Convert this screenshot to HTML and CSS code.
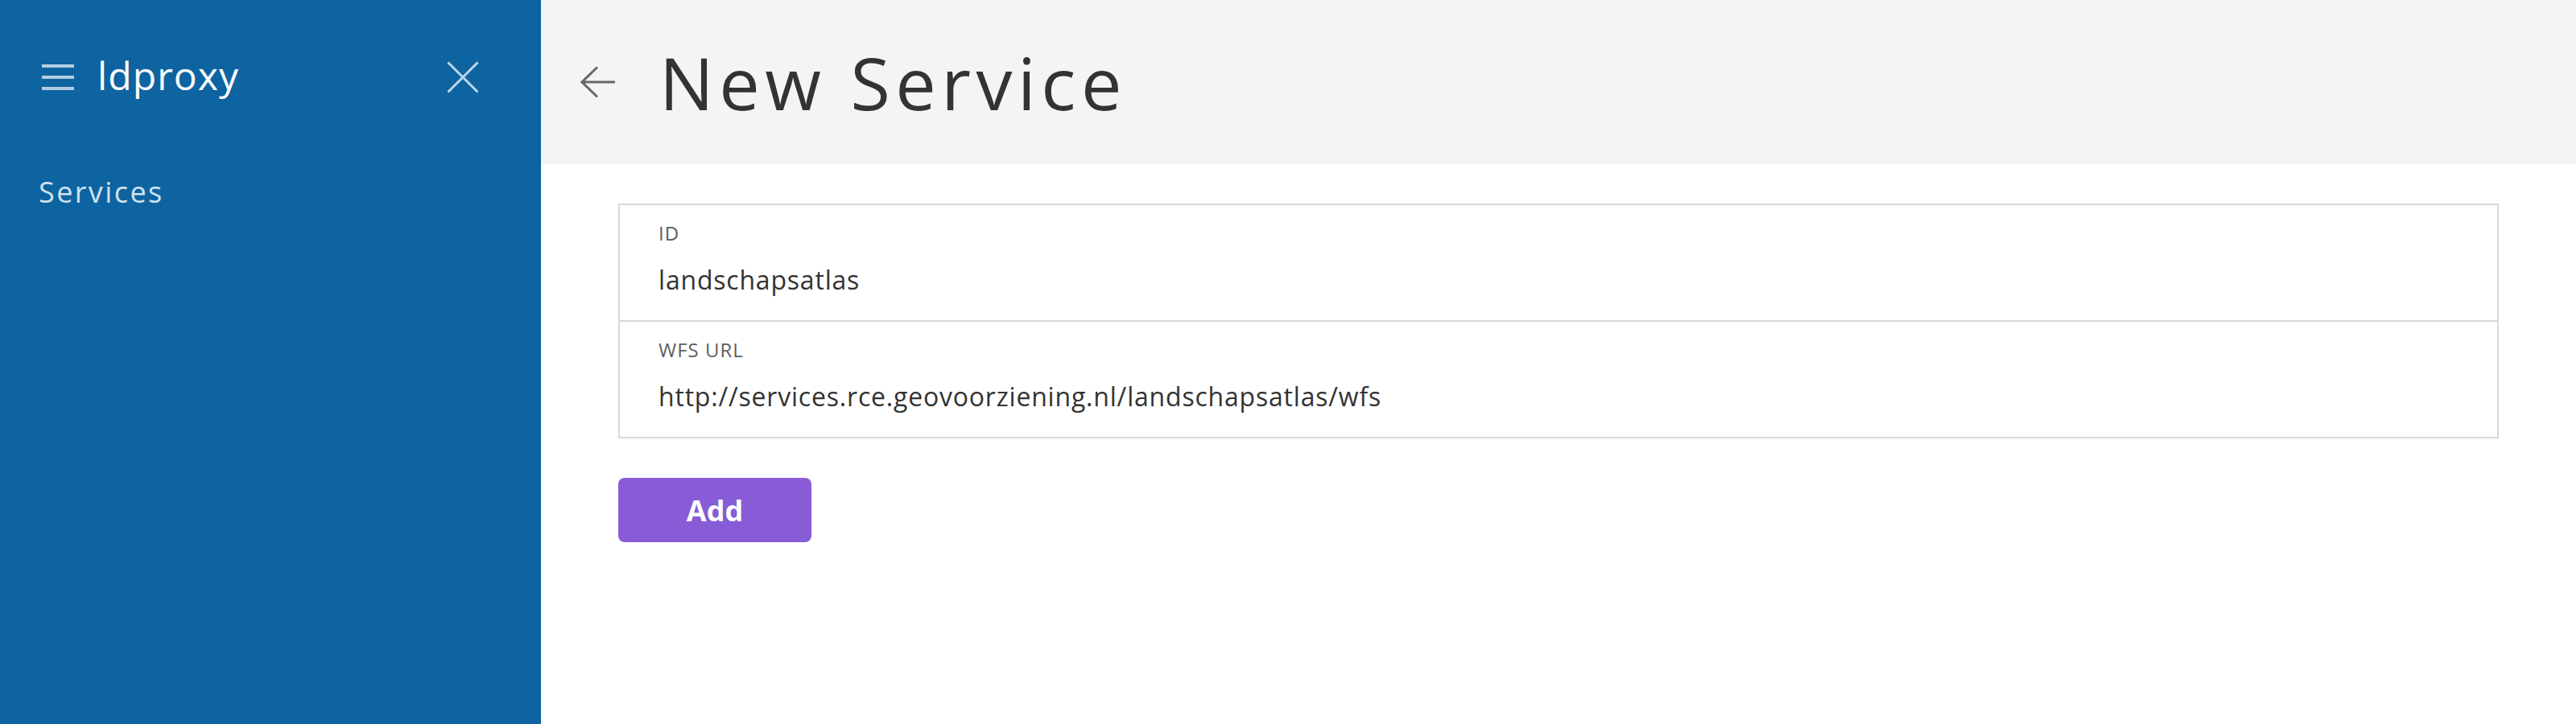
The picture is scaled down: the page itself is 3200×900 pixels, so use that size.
FILE: index.html
```html
<!DOCTYPE html>
<html lang="en">
<head>
<meta charset="utf-8">
<title>ldproxy - New Service</title>
<link rel="stylesheet" href="styles.css">
</head>
<body>
<div class="app">
  <aside class="sidebar">
    <div class="brand-row">
      <svg class="menu-icon" width="40" height="32" viewBox="0 0 40 32" aria-hidden="true">
        <rect x="0" y="0" width="40" height="4" fill="currentColor"/>
        <rect x="0" y="14" width="40" height="4" fill="currentColor"/>
        <rect x="0" y="28" width="40" height="4" fill="currentColor"/>
      </svg>
      <span class="brand">ldproxy</span>
      <svg class="close-icon" width="40" height="40" viewBox="0 0 40 40" aria-hidden="true">
        <path d="M1.5 1.5 L38.5 38.5 M38.5 1.5 L1.5 38.5" stroke="currentColor" stroke-width="3" fill="none"/>
      </svg>
    </div>
    <nav class="nav">
      <a class="nav-item">Services</a>
    </nav>
  </aside>
  <main class="main">
    <header class="page-header">
      <svg class="back-icon" width="44" height="40" viewBox="0 0 44 40" aria-hidden="true">
        <path d="M21 1.5 L2 20 L21 38.5 M2 20 L43 20" stroke="currentColor" stroke-width="3" fill="none"/>
      </svg>
      <h1 class="title">New Service</h1>
    </header>
    <section class="content">
      <div class="form-box">
        <div class="field">
          <div class="field-label">ID</div>
          <div class="field-value">landschapsatlas</div>
        </div>
        <div class="field">
          <div class="field-label">WFS URL</div>
          <div class="field-value">http://services.rce.geovoorziening.nl/landschapsatlas/wfs</div>
        </div>
      </div>
      <button class="btn-add">Add</button>
    </section>
  </main>
</div>
</body>
</html>
```
FILE: styles.css
```css
* { box-sizing: border-box; }
html, body {
  margin: 0;
  padding: 0;
  height: 900px;
  font-family: "Open Sans", "Noto Sans", sans-serif;
  background: #ffffff;
}
.app {
  display: flex;
  height: 900px;
}
.sidebar {
  width: 672px;
  flex: 0 0 672px;
  background: #0d64a1;
  color: #ffffff;
}
.brand-row {
  display: flex;
  align-items: center;
  height: 48px;
  margin-top: 72px;
  padding: 0 77px 0 52px;
}
.menu-icon {
  color: #b3cde3;
  flex: 0 0 auto;
}
.brand {
  flex: 1;
  margin-left: 29px;
  margin-bottom: 5px;
  font-size: 48px;
  line-height: 48px;
  letter-spacing: 1.1px;
  font-weight: 500;
  color: #ffffff;
}
.close-icon {
  color: #bdd6ea;
  flex: 0 0 auto;
}
.nav {
  margin-top: 95px;
  padding-left: 48px;
}
.nav-item {
  display: block;
  font-size: 36px;
  line-height: 48px;
  letter-spacing: 2.4px;
  color: #cfe1ef;
}
.main {
  flex: 1;
  display: flex;
  flex-direction: column;
}
.page-header {
  height: 204px;
  background: #f4f4f4;
  display: flex;
  align-items: center;
  padding-left: 49px;
}
.back-icon {
  color: #666666;
  flex: 0 0 auto;
}
.title {
  margin: 0 0 0 54px;
  font-size: 90px;
  line-height: 90px;
  font-weight: 500;
  letter-spacing: 6.5px;
  color: #333333;
}
.content {
  padding: 49px 96px 0 96px;
}
.form-box {
  border: 2px solid #d9d9d9;
}
.field {
  padding: 19px 48px 28px 48px;
}
.field + .field {
  border-top: 2px solid #d9d9d9;
}
.field-label {
  font-size: 24px;
  line-height: 32px;
  letter-spacing: 1px;
  color: #5e5e5e;
}
.field-value {
  margin-top: 20px;
  font-size: 32px;
  line-height: 44px;
  letter-spacing: 0.8px;
  color: #333333;
}
.btn-add {
  display: block;
  margin-top: 49px;
  width: 240px;
  height: 80px;
  border: 0;
  border-radius: 8px;
  background: #875cd6;
  color: #ffffff;
  font-family: "Open Sans", "Noto Sans", sans-serif;
  font-size: 36px;
  font-weight: 700;
  padding: 0;
}
```
